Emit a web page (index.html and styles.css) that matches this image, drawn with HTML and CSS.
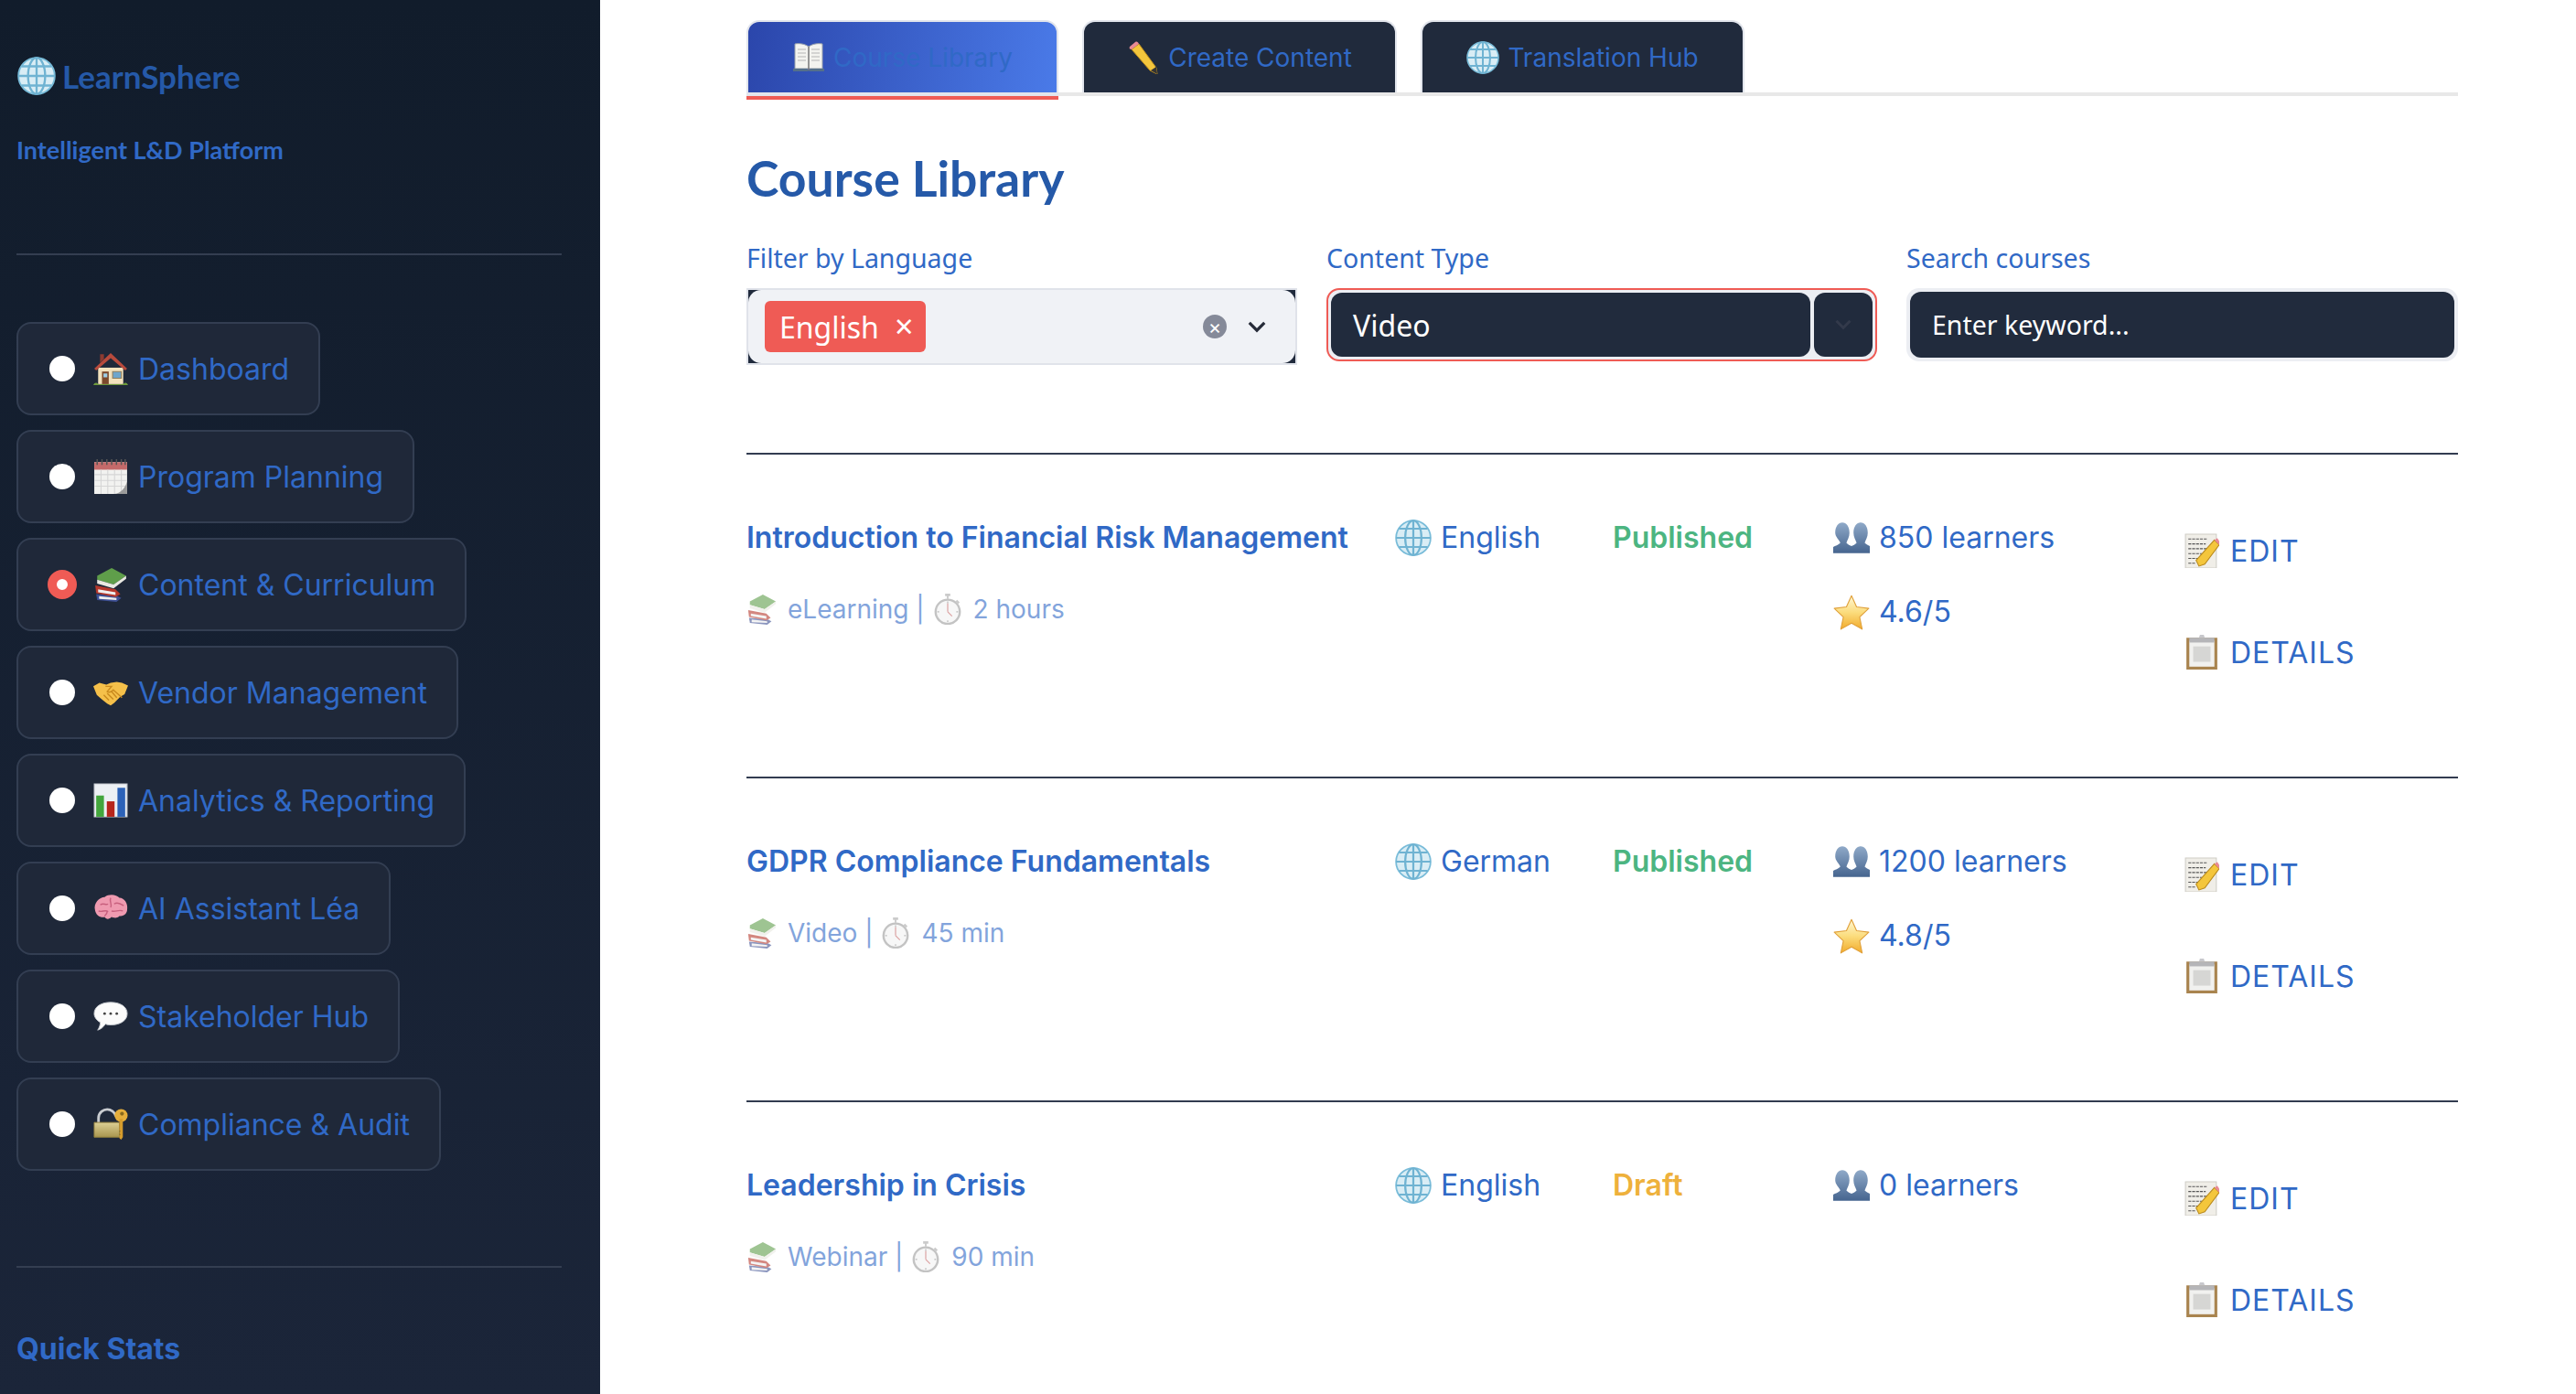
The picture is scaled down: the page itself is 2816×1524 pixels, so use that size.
FILE: index.html
```html
<!DOCTYPE html>
<html lang="en">
<head>
    <meta charset="UTF-8">
    <title>LearnSphere</title>
    <link rel="stylesheet" href="styles.css">
</head>
<body>

<svg class="sprite" xmlns="http://www.w3.org/2000/svg">
    <defs>
        <linearGradient id="gPeople" x1="0" y1="0" x2="0" y2="1"><stop offset="0" stop-color="#8fa9c8"/><stop offset="1" stop-color="#46658f"/></linearGradient>
        <linearGradient id="gStar" x1="0" y1="0" x2="0" y2="1"><stop offset="0" stop-color="#fff8d6"/><stop offset="0.5" stop-color="#fbdc7c"/><stop offset="1" stop-color="#f2ab2c"/></linearGradient>
        <linearGradient id="gLock" x1="0" y1="0" x2="0" y2="1"><stop offset="0" stop-color="#dccf95"/><stop offset="1" stop-color="#a8964e"/></linearGradient>
    </defs>
    <symbol id="i-globe" viewBox="0 0 36 36">
        <circle cx="18" cy="18" r="17" fill="#d9edf5" stroke="#79bcd9" stroke-width="1.6"/>
        <g fill="none" stroke="#6fb3d2" stroke-width="2">
            <ellipse cx="18" cy="18" rx="8" ry="17"/>
            <path d="M18 1v34M1 18h34M4 9h28M4 27h28"/>
        </g>
    </symbol>
    <symbol id="i-house" viewBox="0 0 36 36">
        <path d="M5 17h26v17H5z" fill="#f3e2bd"/>
        <path d="M18 2L1 18l2 2L18 7l15 13 2-2z" fill="#b84a3c"/>
        <path d="M7 3h4v5l-4 4z" fill="#8c3a30"/>
        <path d="M9 21h7v13H9z" fill="#7c4a2c"/>
        <path d="M10.500 23h4v4h-4z" fill="#9fd0e8"/>
        <path d="M20 21h9v7h-9z" fill="#6fa6cc" stroke="#8f7d5c"/>
        <path d="M0 35c1-3 4-3 5-1h26c1-2 4-2 5 1z" fill="#6e9a3c"/>
    </symbol>
    <symbol id="i-calendar" viewBox="0 0 36 36">
        <path d="M1 3h34v33H1z" fill="#f2f2f0"/>
        <path d="M1 3h34v8H1z" fill="#c46a6a"/>
        <path d="M1 16h34M1 22h34M1 28h34M8 11v25M15 11v25M22 11v25M29 11v25" stroke="#d5d5d5" fill="none"/>
        <path d="M4 0v6M9 0v6M14 0v6M19 0v6M24 0v6M29 0v6M33 0v6" stroke="#555" stroke-width="1.400"/>
        <path d="M35 23v13H22c7-1 11-6 13-13z" fill="#9a9a9a"/>
    </symbol>
    <symbol id="i-books" viewBox="0 0 36 36">
        <path d="M3 28l22 2 4 2-5 4L4 34z" fill="#3d4f93"/>
        <path d="M6 30l18 2v2L6 33z" fill="#eee"/>
        <path d="M2 19l21 4 5 5-5 3L3 27z" fill="#b6382c"/>
        <path d="M5 23l18 3v3L5 26z" fill="#eee"/>
        <path d="M4 9L19 1l15 8-13 9-17-5z" fill="#5f9e4a"/>
        <path d="M4 13l17 5 13-9v3L21 22 4 17z" fill="#e9e9e2"/>
    </symbol>
    <symbol id="i-handshake" viewBox="0 0 40 36">
        <path d="M0 11l7-4 8 2 5-2 7-1 6 1 7 3-4 10-5 3-7 7-4 3-4-2-5-4-7-6z" fill="#f5c04a"/>
        <path d="M14 11l7 0-5 6c3 2 5 0 7-2l10 9M12 21l6 6M16 19l7 7M21 17l6 7" fill="none" stroke="#c98a1e" stroke-width="1.500"/>
    </symbol>
    <symbol id="i-chart" viewBox="0 0 36 36">
        <path d="M1 1h34v34H1z" fill="#edf0f4" stroke="#c8ccd2"/>
        <path d="M3 13h8v22H3z" fill="#43a63c"/>
        <path d="M14 19h8v16h-8z" fill="#b7261c"/>
        <path d="M25 5h8v30h-8z" fill="#2c62b8"/>
    </symbol>
    <symbol id="i-brain" viewBox="0 0 40 36">
        <path d="M2 20C0 12 7 5 13 5c5-4 14-3 17 1 6 0 10 7 9 13 0 6-5 8-9 8-3 3-7 2-9 1-3 3-6 3-8 0-5 1-10-2-11-8z" fill="#ef9ab0"/>
        <path d="M8 14c4-3 6 1 9-1M20 6c-2 4 2 7 0 11M24 13c4-3 8 0 11 2M6 21c4 2 8-2 11 1M21 21c4 2 8-2 13 0M13 27c2-2 3-3 3-5" fill="none" stroke="#c8607e" stroke-width="1.500"/>
    </symbol>
    <symbol id="i-speech" viewBox="0 0 40 36">
        <path d="M20 2c11 0 19 5 19 13s-8 13-19 13c-2 0-4 0-6-1-2 3-5 6-9 7 2-3 3-6 3-9-4-2-7-6-7-10C1 7 9 2 20 2z" fill="#fbfbfb" stroke="#c4c8ce"/>
        <circle cx="13" cy="15" r="1.500" fill="#444"/><circle cx="20" cy="15" r="1.500" fill="#444"/><circle cx="27" cy="15" r="1.500" fill="#444"/>
    </symbol>
    <symbol id="i-lock" viewBox="0 0 40 36">
        <path d="M6 17V11C6 4 12 1 16 1s9 3 10 8" fill="none" stroke="#c9ccd0" stroke-width="3"/>
        <path d="M1 16h29v17H1z" fill="url(#gLock)" stroke="#8f7e3d"/>
        <circle cx="32" cy="8" r="7.500" fill="#e5ae3c"/>
        <circle cx="33" cy="6" r="2.200" fill="#8a6a1e"/>
        <path d="M30 12h4v21l-2 3-2-2v-3l1-1-1-2 1-2-1-1z" fill="#d59c2c"/>
    </symbol>
    <symbol id="i-book" viewBox="0 0 36 36">
        <path d="M3 3c5-1 11 0 15 3 4-3 10-4 15-3v27H3z" fill="#f3f3ef" stroke="#9aa2ab"/>
        <path d="M18 6v26" stroke="#777" stroke-width="1.500"/>
        <path d="M6 9h9M6 13h9M6 17h9M6 21h9M21 9h9M21 13h9M21 17h9M21 21h9" stroke="#b5b5b5" stroke-width="1.200"/>
        <path d="M1 30h15l2 3 2-3h15v3H1z" fill="#55708a"/>
    </symbol>
    <symbol id="i-pencil" viewBox="0 0 36 36">
        <path d="M5 9l8-6 19 26 1 7-8-4z" fill="#f4c63c" stroke="#b98a1e"/>
        <path d="M3 6l6-5c2-1 3 0 4 2l-8 6C3 9 2 8 3 6z" fill="#e88a94"/>
        <path d="M26 32l6-4 1 8z" fill="#333"/>
    </symbol>
    <symbol id="i-watch" viewBox="0 0 32 36">
        <path d="M13 0h6v3h-2v3h-2V3h-2z" fill="#aaa"/>
        <circle cx="16" cy="21" r="14" fill="#f2f2f2" stroke="#9c9c9c" stroke-width="2.500"/>
        <path d="M26 8l3 3" stroke="#aaa" stroke-width="2.500"/>
        <path d="M16 21V11M16 21l5 5" stroke="#c46060" stroke-width="1.200"/>
        <path d="M16 9v2M16 31v2M4 21h2M26 21h2" stroke="#888" stroke-width="1.200"/>
    </symbol>
    <symbol id="i-people" viewBox="0 0 36 30">
        <path d="M9 0c4 0 7 4 7 10 0 4-2 7-3 10 2 2 4 3 5 3 1 0 3-1 5-3-1-3-3-6-3-10 0-6 3-10 7-10s7 4 7 10c0 4-2 7-3 10 2 2 5 3 7 4v6H0v-6c2-1 5-2 7-4-1-3-5-6-5-10C2 4 5 0 9 0z" fill="url(#gPeople)"/>
    </symbol>
    <symbol id="i-star" viewBox="0 0 36 36">
        <path d="M18 2l5 11 12 1.500-9 8.500 2.500 12L18 29 7.500 35 10 23 1 14.500 13 13z" fill="url(#gStar)" stroke="#e0a03a" stroke-linejoin="round"/>
    </symbol>
    <symbol id="i-memo" viewBox="0 0 36 36">
        <path d="M1 1h32v35H1z" fill="#f0eee8" stroke="#cfcdc6"/>
        <path d="M4 6h20M4 11h18M4 16h20M4 21h14M4 26h12M4 31h8" stroke="#555" stroke-width="1" stroke-dasharray="3 1"/>
        <path d="M12 28l3 6 6-2 15-20-5-5z" fill="#f4c63c" stroke="#b98a1e"/>
        <path d="M31 7l5 5 0-4-2-3z" fill="#e88a94"/>
    </symbol>
    <symbol id="i-clip" viewBox="0 0 34 36">
        <path d="M1 3h32v33H1z" fill="#a9844f"/>
        <path d="M4 6h26v27H4z" fill="#f1f1ef"/>
        <path d="M8 12h18v16H8z" fill="#d6d6d4"/>
        <path d="M4 3h26v5H4z" fill="#b5b5b8"/>
        <path d="M14 3l1-3h4l1 3z" fill="#c8c8cc"/>
    </symbol>
</svg>

<div class="app">
    <aside class="sidebar">
        <div class="brand">
            <svg class="brand-icon"><use href="#i-globe"/></svg>
            <span>LearnSphere</span>
        </div>
        <p class="tagline">Intelligent L&amp;D Platform</p>
        <hr class="side-rule">

        <nav class="nav">
            <label class="nav-item"><span class="radio"></span><svg class="nav-icon"><use href="#i-house"/></svg>Dashboard</label>
            <label class="nav-item"><span class="radio"></span><svg class="nav-icon"><use href="#i-calendar"/></svg>Program Planning</label>
            <label class="nav-item"><span class="radio radio-on"></span><svg class="nav-icon"><use href="#i-books"/></svg>Content &amp; Curriculum</label>
            <label class="nav-item"><span class="radio"></span><svg class="nav-icon"><use href="#i-handshake"/></svg>Vendor Management</label>
            <label class="nav-item"><span class="radio"></span><svg class="nav-icon"><use href="#i-chart"/></svg>Analytics &amp; Reporting</label>
            <label class="nav-item"><span class="radio"></span><svg class="nav-icon"><use href="#i-brain"/></svg>AI Assistant Léa</label>
            <label class="nav-item"><span class="radio"></span><svg class="nav-icon"><use href="#i-speech"/></svg>Stakeholder Hub</label>
            <label class="nav-item"><span class="radio"></span><svg class="nav-icon"><use href="#i-lock"/></svg>Compliance &amp; Audit</label>
        </nav>

        <hr class="side-rule side-rule-low">
        <h3 class="stats-title">Quick Stats</h3>
    </aside>

    <main class="main">
        <div class="tabs">
            <button class="tab tab-active"><svg class="tab-icon"><use href="#i-book"/></svg>Course Library</button>
            <button class="tab"><svg class="tab-icon"><use href="#i-pencil"/></svg>Create Content</button>
            <button class="tab"><svg class="tab-icon"><use href="#i-globe"/></svg>Translation Hub</button>
        </div>

        <h1 class="page-title">Course Library</h1>

        <div class="filters">
            <div class="filter">
                <div class="filter-label">Filter by Language</div>
                <div class="multi-wrap">
                    <div class="multi">
                        <span class="tag">English <span class="tag-x">×</span></span>
                        <span class="clear">×</span>
                        <svg class="chev" viewBox="0 0 24 14"><path d="M3 2l9 9 9-9" fill="none" stroke="#262b38" stroke-width="3.500"/></svg>
                    </div>
                </div>
            </div>
            <div class="filter">
                <div class="filter-label">Content Type</div>
                <div class="select">
                    <div class="select-value">Video</div>
                    <div class="select-arrow">
                        <svg class="chev-dim" viewBox="0 0 24 14"><path d="M3 2l9 9 9-9" fill="none" stroke="#333a4b" stroke-width="3.500"/></svg>
                    </div>
                </div>
            </div>
            <div class="filter">
                <div class="filter-label">Search courses</div>
                <div class="search"><div class="search-box">Enter keyword...</div></div>
            </div>
        </div>

        <section class="course">
            <div>
                <div class="course-title">Introduction to Financial Risk Management</div>
                <div class="course-meta"><svg class="meta-icon"><use href="#i-books"/></svg>eLearning | <svg class="meta-icon"><use href="#i-watch"/></svg>2 hours</div>
            </div>
            <div class="cell"><svg class="cell-icon"><use href="#i-globe"/></svg>English</div>
            <div class="status published">Published</div>
            <div>
                <div class="cell"><svg class="cell-icon"><use href="#i-people"/></svg>850 learners</div>
                <div class="cell rating"><svg class="cell-icon"><use href="#i-star"/></svg>4.6/5</div>
            </div>
            <div class="actions">
                <button class="action"><svg class="action-icon"><use href="#i-memo"/></svg>EDIT</button>
                <button class="action"><svg class="action-icon"><use href="#i-clip"/></svg>DETAILS</button>
            </div>
        </section>

        <section class="course">
            <div>
                <div class="course-title">GDPR Compliance Fundamentals</div>
                <div class="course-meta"><svg class="meta-icon"><use href="#i-books"/></svg>Video | <svg class="meta-icon"><use href="#i-watch"/></svg>45 min</div>
            </div>
            <div class="cell"><svg class="cell-icon"><use href="#i-globe"/></svg>German</div>
            <div class="status published">Published</div>
            <div>
                <div class="cell"><svg class="cell-icon"><use href="#i-people"/></svg>1200 learners</div>
                <div class="cell rating"><svg class="cell-icon"><use href="#i-star"/></svg>4.8/5</div>
            </div>
            <div class="actions">
                <button class="action"><svg class="action-icon"><use href="#i-memo"/></svg>EDIT</button>
                <button class="action"><svg class="action-icon"><use href="#i-clip"/></svg>DETAILS</button>
            </div>
        </section>

        <section class="course">
            <div>
                <div class="course-title">Leadership in Crisis</div>
                <div class="course-meta"><svg class="meta-icon"><use href="#i-books"/></svg>Webinar | <svg class="meta-icon"><use href="#i-watch"/></svg>90 min</div>
            </div>
            <div class="cell"><svg class="cell-icon"><use href="#i-globe"/></svg>English</div>
            <div class="status draft">Draft</div>
            <div>
                <div class="cell"><svg class="cell-icon"><use href="#i-people"/></svg>0 learners</div>
            </div>
            <div class="actions">
                <button class="action"><svg class="action-icon"><use href="#i-memo"/></svg>EDIT</button>
                <button class="action"><svg class="action-icon"><use href="#i-clip"/></svg>DETAILS</button>
            </div>
        </section>
    </main>
</div>

</body>
</html>
```

FILE: styles.css
```css
html, body {
    margin: 0;
    height: 100%;
    overflow: hidden;
}
body {
    font-family: Inter, sans-serif;
    color: #3069c6;
    background: white;
}
.sprite {
    display: block;
    width: 0;
    height: 0;
}
.app {
    display: flex;
    height: 1524px;
}

/* sidebar */
.sidebar {
    width: 656px;
    flex-shrink: 0;
    box-sizing: border-box;
    padding: 62px 42px 0 18px;
    background: linear-gradient(180deg, #111c2b 0%, #1b2539 100%);
}
.brand {
    display: flex;
    align-items: center;
    gap: 7px;
    height: 42px;
    font-family: Lato, sans-serif;
    font-size: 35px;
    font-weight: 700;
    color: #2559a8;
}
.brand-icon {
    width: 42px;
    height: 42px;
    margin-left: 1px;
}
.tagline {
    margin: 40px 0 0;
    font-family: Lato, sans-serif;
    font-size: 27px;
    line-height: 40px;
    font-weight: 700;
    color: #3069c6;
}
.side-rule {
    margin: 93px 0 0;
    border: none;
    height: 2px;
    background: #343e51;
}
.side-rule-low {
    margin-top: 104px;
}
.nav {
    display: flex;
    flex-direction: column;
    align-items: flex-start;
    gap: 16px;
    margin-top: 73px;
}
.nav-item {
    display: flex;
    align-items: center;
    box-sizing: border-box;
    height: 102px;
    padding: 0 32px 0 32px;
    background: #1f2839;
    border: 2px solid #333e52;
    border-radius: 16px;
    font-size: 32px;
}
.radio {
    width: 32px;
    height: 32px;
    box-sizing: border-box;
    border: 2px solid transparent;
    background: white;
    background-clip: padding-box;
    border-radius: 50%;
    margin-right: 18px;
}
.radio-on {
    border: 10px solid #ef5b55;
    background-clip: border-box;
}
.nav-icon {
    width: 38px;
    height: 38px;
    margin-right: 11px;
}
.stats-title {
    margin: 69px 0 0;
    font-size: 32px;
    line-height: 40px;
    font-weight: 700;
}

/* main */
.main {
    flex: 1;
    min-width: 0;
    padding: 22px 129px 0 160px;
}
.tabs {
    display: flex;
    gap: 26px;
    border-bottom: 4px solid #e8e8e8;
    height: 79px;
}
.tab {
    display: flex;
    align-items: center;
    justify-content: center;
    gap: 9px;
    box-sizing: border-box;
    height: 79px;
    padding: 0;
    background: #202a3c;
    border: 2px solid #e2e5ec;
    border-bottom: none;
    border-radius: 14px 14px 0 0;
    font-family: Inter, sans-serif;
    font-size: 28px;
    color: #3069c6;
    width: 344px;
}
.tab:nth-child(3) {
    width: 354px;
}
.tab-active {
    background: linear-gradient(100deg, #2b46ab 0%, #4a7ae8 100%);
    box-shadow: 0 4px 0 #ef5b55;
    height: 83px;
    border-bottom: 4px solid #e2e5ec;
    width: 341px;
}
.tab-icon {
    width: 36px;
    height: 36px;
}
.page-title {
    margin: 53px 0 0;
    font-family: Lato, sans-serif;
    font-size: 53.500px;
    line-height: 72px;
    font-weight: 700;
    color: #2559a8;
}
.filters {
    display: grid;
    grid-template-columns: 602px 602px 1fr;
    gap: 32px;
    margin-top: 33px;
}
.filter-label {
    font-family: "Noto Sans", sans-serif;
    font-size: 28.500px;
    line-height: 38px;
    margin-bottom: 14px;
}
.multi-wrap {
    box-sizing: border-box;
    height: 84px;
    background: #202a3c;
    border: 2px solid #e0e3ea;
}
.multi {
    display: flex;
    align-items: center;
    box-sizing: border-box;
    height: 100%;
    padding: 0 31px 0 18px;
    background: #f0f2f6;
    border-radius: 14px;
}
.tag {
    display: flex;
    align-items: center;
    height: 56px;
    padding: 0 14px 0 16px;
    background: #ef5b55;
    border-radius: 6px;
    color: white;
    font-family: "Noto Sans", sans-serif;
    font-size: 32px;
}
.tag-x {
    margin-left: 17px;
    font-size: 36px;
    line-height: 1;
}
.clear {
    display: flex;
    align-items: center;
    justify-content: center;
    margin-left: auto;
    margin-right: 2px;
    width: 26px;
    height: 26px;
    border-radius: 50%;
    background: #858a99;
    color: white;
    font-size: 22px;
    line-height: 1;
}
.chev {
    width: 22px;
    height: 13px;
    margin-left: 20px;
}
.select {
    display: flex;
    gap: 4px;
    box-sizing: border-box;
    height: 80px;
    padding: 3px;
    background: #eceef3;
    border: 2px solid #ef5b55;
    border-radius: 14px;
}
.select-value {
    flex: 1;
    display: flex;
    align-items: center;
    padding-left: 24px;
    background: #212b3d;
    border-radius: 12px;
    color: white;
    font-family: "Noto Sans", sans-serif;
    font-size: 32px;
}
.select-arrow {
    width: 64px;
    display: flex;
    align-items: center;
    justify-content: center;
    background: #212b3d;
    border-radius: 12px;
}
.chev-dim {
    width: 20px;
    height: 12px;
}
.search {
    box-sizing: border-box;
    height: 80px;
    padding: 4px;
    background: #eceef3;
    border-radius: 14px;
}
.search-box {
    display: flex;
    align-items: center;
    height: 100%;
    padding-left: 24px;
    background: #212b3d;
    border-radius: 12px;
    color: white;
    font-family: "Noto Sans", sans-serif;
    font-size: 28.500px;
}

/* course rows */
.course {
    display: grid;
    grid-template-columns: 709px 238px 241px 384px 1fr;
    align-items: start;
    box-sizing: border-box;
    height: 354px;
    padding-top: 70px;
    border-top: 2px solid #323c50;
}
.filters + .course {
    margin-top: 96px;
}
.course-title {
    font-size: 32px;
    line-height: 42px;
    font-weight: 600;
}
.course-meta {
    display: flex;
    align-items: center;
    margin-top: 36px;
    font-size: 28px;
    line-height: 42px;
    opacity: 0.6;
    white-space: pre;
}
.meta-icon {
    width: 34px;
    height: 34px;
    margin-right: 11px;
}
.cell {
    display: flex;
    align-items: center;
    gap: 10px;
    font-size: 32px;
    line-height: 42px;
}
.cell-icon {
    width: 40px;
    height: 40px;
}
.rating {
    margin-top: 39px;
}
.status {
    font-size: 32px;
    line-height: 42px;
    font-weight: 600;
}
.published {
    color: #4cb581;
}
.draft {
    color: #eeb13c;
}
.actions {
    display: flex;
    flex-direction: column;
    align-items: flex-start;
    gap: 69px;
    padding-top: 14px;
}
.action {
    display: flex;
    align-items: center;
    gap: 12px;
    height: 42px;
    padding: 0;
    background: none;
    border: none;
    font-family: Inter, sans-serif;
    font-size: 32px;
    letter-spacing: 1px;
    color: #3069c6;
}
.action-icon {
    width: 38px;
    height: 38px;
}
```
